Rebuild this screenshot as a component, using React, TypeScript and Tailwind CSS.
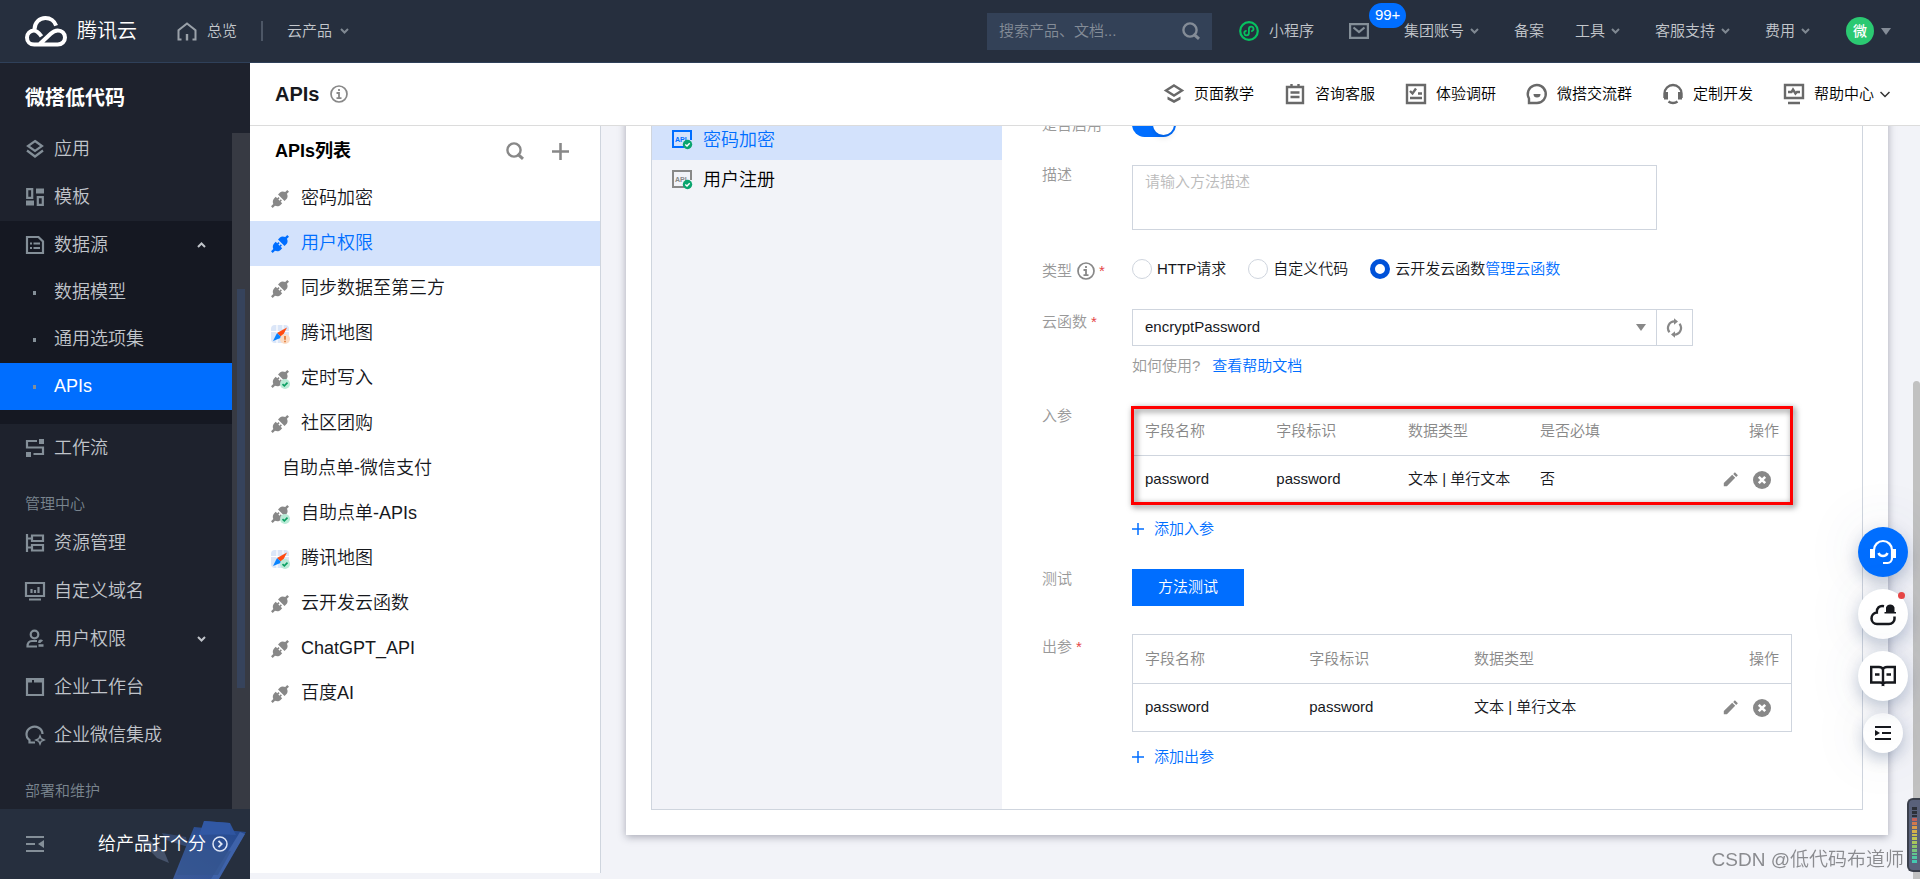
import type { ReactNode } from 'react';
import { useState } from 'react';
import clsx from 'clsx';

type IconProps = { className?: string };

const Chevron = ({ className }: IconProps) => (
  <svg className={className} width="9" height="6" viewBox="0 0 9 6" fill="none" stroke="currentColor" strokeWidth="2">
    <path d="M1 1l3.5 3.5L8 1" />
  </svg>
);

const Caret = ({ className }: IconProps) => (
  <svg className={className} width="10" height="7" viewBox="0 0 10 7" fill="currentColor">
    <path d="M0 0h10L5 7z" />
  </svg>
);

const SearchIcon = ({ className }: IconProps) => (
  <svg className={className} width="18" height="18" viewBox="0 0 18 18" fill="none" stroke="currentColor" strokeWidth="2.4">
    <circle cx="8" cy="8" r="6.6" />
    <path d="M11.5 12l5.5 4.8" strokeWidth="3" />
  </svg>
);

const InfoIcon = ({ className }: IconProps) => (
  <svg className={className} width="18" height="18" viewBox="0 0 18 18" fill="none" stroke="currentColor">
    <circle cx="9" cy="9" r="8" strokeWidth="1.7" />
    <path d="M9 4v2M6.5 8H9v5M6.5 13.2h5" strokeWidth="1.8" />
  </svg>
);

const CloudLogo = () => (
  <svg width="42" height="31" viewBox="0 0 42 31" fill="none" stroke="#fff" strokeWidth="4">
    <path d="M9.5 13.2C9.6 6.6 14.4 2 20.4 2c5 0 9.200 3 10.700 7.600" />
    <path d="M16.500 20.300c-2.900-4-5-5.800-7.700-5.800A6.900 6.900 0 0 0 2 21.400C2 25.600 5 28.600 9.200 28.600h23.500c4.200 0 7.300-3.100 7.300-7.100s-3.100-7.100-7.200-7.100c-3 0-5 1.300-7.100 3.300L14.500 28.200" />
  </svg>
);

const HomeIcon = () => (
  <svg width="20" height="19" viewBox="0 0 20 19" fill="none" stroke="currentColor" strokeWidth="2">
    <path d="M4.500 17.500H1.500V8.300L10 1.500l8.500 6.800v9.200h-3" />
    <path d="M10 12v6.500" strokeWidth="2.400" />
  </svg>
);

const MiniProgramIcon = () => (
  <svg width="20" height="20" viewBox="0 0 20 20" fill="none" stroke="#07c160">
    <circle cx="10" cy="10" r="8.800" strokeWidth="2.200" />
    <path d="M7 9.800a2.300 2.300 0 1 0 2.900 2.300V7.800a2.300 2.300 0 1 1 2.900 2.300" strokeWidth="1.800" strokeLinecap="round" />
  </svg>
);

const MailIcon = () => (
  <svg width="20" height="16" viewBox="0 0 20 16" fill="none" stroke="currentColor" strokeWidth="2.200">
    <path d="M1.100 1.100h17.800v13.800H1.100z" />
    <path d="M4.500 4.500L10 9l5.500-4.500" />
  </svg>
);

const PlugIcon = () => (
  <svg width="18" height="18" viewBox="0 0 18 18" fill="currentColor">
    <g transform="translate(9 9) rotate(-45)">
      <path d="M-11.500-1.200h3.200c.8-2 2.600-3.400 4.500-3.400h2.300v2.200h1.800v1.600h-1.800V.8H.3v1.600h-1.800v2.200h-2.300c-1.900 0-3.700-1.400-4.500-3.400h-3.200z" />
      <path d="M11.500-1.200H8.600C8-3.200 6.400-4.600 4.600-4.600H1.800v9.200h2.800c1.800 0 3.400-1.400 4-3.400h2.900z" />
    </g>
  </svg>
);

const MapIcon = () => (
  <svg width="18" height="18" viewBox="0 0 18 18">
    <rect width="18" height="18" rx="4" fill="#dbe6f8" />
    <path d="M6 0v18M0 6.500h18M12 0v4" stroke="#fff" strokeWidth="1.200" />
    <path d="M16 2.500L6 8l4.800 4.500z" fill="#ff4b12" />
    <path d="M2 16l4-8 4.800 4.500z" fill="#0a84ff" />
  </svg>
);

const StatusBadge = ({ kind }: { kind: 'ok' | 'warn' }) => (
  <svg className="absolute -bottom-px -right-px" width="10" height="10" viewBox="0 0 10 10" fill="none">
    <circle cx="5" cy="5" r="5" fill={kind === 'ok' ? '#b9ead6' : '#fbdcc5'} />
    {kind === 'ok' ? (
      <path d="M2.500 5.200l1.800 1.700 3.200-3.300" stroke="#0a9f62" strokeWidth="1.600" />
    ) : (
      <path d="M5 2v3.700M5 6.800v1.400" stroke="#e0762f" strokeWidth="1.600" />
    )}
  </svg>
);

const ApiIcon = () => (
  <svg width="21" height="20" viewBox="0 0 21 20" fill="none" stroke="currentColor">
    <path d="M12 17H1V1h18v9" strokeWidth="2" />
    <text x="3" y="12" fontSize="7" fontWeight="bold" fill="currentColor" stroke="none">API</text>
    <circle cx="15.500" cy="14.500" r="4.700" fill="#0aa56e" stroke="none" />
    <path d="M13.300 14.500l1.700 1.600 2.700-2.900" stroke="#fff" strokeWidth="1.400" />
  </svg>
);

const PencilIcon = () => (
  <svg width="15" height="15" viewBox="0 0 15 15" fill="currentColor">
    <path d="M.8 14.200v-3.100L9.200 2.800l3 3L3.900 14.200zM10.200 1.900L11.900.2l3 3-1.700 1.700z" />
  </svg>
);

const RemoveIcon = () => (
  <svg width="18" height="18" viewBox="0 0 18 18">
    <circle cx="9" cy="9" r="9" fill="currentColor" />
    <path d="M5.800 5.800l6.400 6.400M12.200 5.800l-6.400 6.400" stroke="#fff" strokeWidth="2.600" />
  </svg>
);

const RefreshIcon = () => (
  <svg width="17" height="20" viewBox="0 0 17 20">
    <path d="M3.500 14.200A6.600 6.600 0 0 1 8.500 3.400M13.500 5.800A6.600 6.600 0 0 1 8.500 16.600" fill="none" stroke="currentColor" strokeWidth="2.200" />
    <path d="M8 .2l4 3.300-4 3.300zM9 19.800l-4-3.300 4-3.300z" fill="currentColor" />
  </svg>
);

const PlusIcon = ({ size = 12, weight = 1.5 }: { size?: number; weight?: number }) => (
  <svg width={size} height={size} viewBox="0 0 12 12" stroke="currentColor" strokeWidth={weight}>
    <path d="M6 0v12M0 6h12" />
  </svg>
);

// 侧边栏图标
const navIcons: Record<string, ReactNode> = {
  app: (
    <>
      <path d="M9 1l7 5-7 5-7-5z" />
      <path d="M1 10.500l8 6 8-6" />
    </>
  ),
  template: (
    <>
      <path d="M1.200 1.200h5v8.600h-5zM11.800 9.200h5v7.600h-5z" />
      <path d="M10 3h8M0 15h8" strokeWidth="5" />
    </>
  ),
  data: (
    <>
      <path d="M1 1h11.500L17 5.500V17H1z" />
      <path d="M4 7.500h2M7.500 7.500H14M4 12h2M7.500 12H14" />
    </>
  ),
  flow: (
    <>
      <path d="M11 2H1v6.500h16V15H7.500" />
      <path d="M15.500 0v5M2.500 13v5" strokeWidth="5" />
    </>
  ),
  resource: (
    <>
      <path d="M1 0v18M1 4.500h5M1 13.500h5" />
      <path d="M6 1.500h11v5.500H6zM6 11h11v5.500H6z" />
    </>
  ),
  domain: (
    <>
      <path d="M0 1h18v13H0zM3 17.500h12" />
      <path d="M5.500 7v4M9 8v3M12.500 5v6" />
    </>
  ),
  user: (
    <>
      <circle cx="8.500" cy="4.500" r="3.800" />
      <path d="M11 11H6c-3 0-4.500 2-4.500 5.500H11" />
      <path d="M12.500 15.500h5M13.500 13v-1.500a1.500 1.500 0 0 1 2.500 0" strokeWidth="2.500" />
    </>
  ),
  bench: (
    <>
      <path d="M1 1h16v16H1z" />
      <path d="M1 3h5M8 3h9" strokeWidth="3" />
    </>
  ),
  wecom: (
    <>
      <path d="M16.500 8A8 7.500 0 1 0 3.500 14v2.500H9" />
      <path d="M14 10l1.200 2.800L18 14l-2.800 1.200L14 18l-1.200-2.800L10 14l2.800-1.200z" strokeWidth="1.500" />
    </>
  ),
};

const NavIcon = ({ name }: { name: string }) => (
  <svg className="shrink-0 overflow-visible text-[#848f98]" width="18" height="18" viewBox="0 0 18 18" fill="none" stroke="currentColor" strokeWidth="2.200">
    {navIcons[name]}
  </svg>
);

const helpLinks: { label: string; icon: ReactNode }[] = [
  {
    label: '页面教学',
    icon: (
      <>
        <path d="M10 1.500l8 5-8 5-8-5z" />
        <path d="M3.500 12.500v3L10 19l6.500-3.500v-3L10 16z" fill="currentColor" stroke="none" />
      </>
    ),
  },
  {
    label: '咨询客服',
    icon: (
      <>
        <path d="M2 3h16v16H2zM6.500 0v4M13.500 0v4" />
        <path d="M5.500 8.500h9M5.500 13h9" />
      </>
    ),
  },
  {
    label: '体验调研',
    icon: (
      <>
        <path d="M1 1h18v18H1z" />
        <path d="M4 7l2.500 2.500L10 4.500M12 9.500h4M4 14h12" />
      </>
    ),
  },
  {
    label: '微搭交流群',
    icon: (
      <>
        <path d="M2 19v-4.500A9 9 0 1 1 10 19z" />
        <path d="M6.500 10h7a3.500 3.500 0 0 1-7 0z" fill="currentColor" stroke="none" />
      </>
    ),
  },
  {
    label: '定制开发',
    icon: (
      <>
        <path d="M1.500 14V9.500a8.500 8.500 0 0 1 17 0V14" />
        <path d="M3 8v7.500M17 8v7.500" strokeWidth="4" />
        <path d="M5.500 17.500c2.500 2 6.500 2 9 0" />
      </>
    ),
  },
  {
    label: '帮助中心',
    icon: (
      <>
        <path d="M1 1h18v13H1zM4 19h12" />
        <path d="M4 8h3.500l1.500-2.500 2.500 4L13 8h3" />
      </>
    ),
  },
];

const topLinks = [
  { label: '集团账号', menu: true },
  { label: '备案', menu: false },
  { label: '工具', menu: true },
  { label: '客服支持', menu: true },
  { label: '费用', menu: true },
];

type ApiItem = { name: string; icon?: 'plug' | 'map'; status?: 'ok' | 'warn'; active?: boolean };

const apiList: ApiItem[] = [
  { name: '密码加密', icon: 'plug' },
  { name: '用户权限', icon: 'plug', active: true },
  { name: '同步数据至第三方', icon: 'plug' },
  { name: '腾讯地图', icon: 'map', status: 'warn' },
  { name: '定时写入', icon: 'plug', status: 'ok' },
  { name: '社区团购', icon: 'plug' },
  { name: '自助点单-微信支付' },
  { name: '自助点单-APIs', icon: 'plug', status: 'ok' },
  { name: '腾讯地图', icon: 'map', status: 'ok' },
  { name: '云开发云函数', icon: 'plug' },
  { name: 'ChatGPT_API', icon: 'plug' },
  { name: '百度AI', icon: 'plug' },
];

function TopBar() {
  return (
    <header className="flex h-[63px] shrink-0 items-center border-b border-[#2f4059] bg-[#262f3e] pl-[25px] pr-[29px] text-[15px] text-[#c3c7cc]">
      <a href="#" className="flex items-center gap-[10px] text-xl text-white">
        <CloudLogo />
        腾讯云
      </a>
      <a href="#" className="ml-10 flex items-center gap-[10px]">
        <span className="text-[#9aa1a9]"><HomeIcon /></span>
        总览
      </a>
      <span className="ml-6 h-5 w-0.5 bg-[#4d5766]" />
      <button className="ml-6 flex items-center gap-2">
        云产品
        <Chevron className="text-[#7f8892]" />
      </button>

      <div className="ml-auto flex items-center">
        <label className="flex h-[37px] w-[225px] items-center bg-[#334157] px-3 text-[#848c97]">
          <input
            aria-label="搜索"
            placeholder="搜索产品、文档..."
            className="min-w-0 flex-1 bg-transparent outline-none placeholder:text-[#848c97]"
          />
          <SearchIcon />
        </label>
        <a href="#" className="ml-[27px] flex items-center gap-[10px]">
          <MiniProgramIcon />
          小程序
        </a>
        <button aria-label="消息" className="relative ml-[35px] mr-[35px] text-[#848f98]">
          <MailIcon />
          <span className="absolute -top-5 left-5 flex h-[25px] items-center rounded-full bg-[#006eff] px-[6px] text-white">99+</span>
        </button>
        <nav className="flex items-center gap-[31px]">
          {topLinks.map((link) => (
            <a
              key={link.label}
              href="#"
              className={clsx('flex items-center gap-[6px]', link.menu ? 'mr-1' : 'mr-0')}
            >
              {link.label}
              {link.menu && <Chevron className="text-[#7f8892]" />}
            </a>
          ))}
        </nav>
        <button className="ml-8 flex items-center gap-[7px] text-[#848c97]">
          <span className="flex size-7 items-center justify-center rounded-full bg-[#2bc972] text-sm font-medium text-white">微</span>
          <Caret />
        </button>
      </div>
    </header>
  );
}

function NavItem({ icon, label, chevron }: { icon: string; label: string; chevron?: 'up' | 'down' }) {
  return (
    <a href="#" className="flex h-12 items-center gap-[10px] pl-[26px] pr-[26px]">
      <NavIcon name={icon} />
      {label}
      {chevron && <Chevron className={clsx('ml-auto', chevron === 'up' && 'rotate-180')} />}
    </a>
  );
}

function SubItem({ label, active }: { label: string; active?: boolean }) {
  return (
    <a
      href="#"
      className={clsx('flex h-[47px] items-center gap-[18px] pl-[33px]', active && 'bg-[#006eff] text-white')}
    >
      <span className="h-1 w-[3px] bg-[#848f98]" />
      {label}
    </a>
  );
}

const NavGroup = ({ children }: { children: ReactNode }) => (
  <h3 className="mt-[17px] h-[30px] pl-[25px] text-[15px] leading-[30px] text-[#7a858f]">{children}</h3>
);

function FeedbackArt() {
  return (
    <svg className="absolute bottom-0 right-1" width="118" height="59" viewBox="0 0 118 59">
      <defs>
        <linearGradient id="board" x1="0" y1="1" x2="1" y2="0">
          <stop offset="0" stopColor="#3c5a99" />
          <stop offset="1" stopColor="#24498f" />
        </linearGradient>
      </defs>
      <path d="M9 14l6 2 21 15 5 12-12-5L12 20z" fill="#46536b" />
      <path d="M34 13l24 4 2 10-22-7z" fill="#34486e" />
      <path d="M66 7l52 5-28 47H45z" fill="url(#board)" />
      <path d="M112 12l5 2-26 45h-8z" fill="#3e62a9" />
      <path d="M60 21c16 9 28 11 43 10L90 55H49z" fill="#35568f" opacity=".7" />
      <path d="M76 1l26 2 6 12-34-1z" fill="#2f55a0" />
      <path d="M76 1l-5 14 31-1V3z" fill="#3158a4" />
    </svg>
  );
}

function Sidebar() {
  return (
    <aside className="flex w-[250px] shrink-0 flex-col bg-[#1e222d] text-[18px] text-[#c0c4ca]">
      <h2 className="h-[70px] shrink-0 pl-[25px] text-xl font-bold leading-[70px] text-white">微搭低代码</h2>
      <div className="flex min-h-0 flex-1">
        <nav className="min-w-0 flex-1 overflow-hidden">
          <div className="-mt-2">
            <NavItem icon="app" label="应用" />
            <NavItem icon="template" label="模板" />
          </div>
          <div className="bg-[#151822] pb-[14px]">
            <NavItem icon="data" label="数据源" chevron="up" />
            <SubItem label="数据模型" />
            <SubItem label="通用选项集" />
            <SubItem label="APIs" active />
          </div>
          <NavItem icon="flow" label="工作流" />
          <NavGroup>管理中心</NavGroup>
          <NavItem icon="resource" label="资源管理" />
          <NavItem icon="domain" label="自定义域名" />
          <NavItem icon="user" label="用户权限" chevron="down" />
          <NavItem icon="bench" label="企业工作台" />
          <NavItem icon="wecom" label="企业微信集成" />
          <NavGroup>部署和维护</NavGroup>
        </nav>
        <div className="flex w-[18px] flex-col bg-[#373a43] px-[5px]">
          <div className="h-[156px]" />
          <div className="h-[399px] bg-[#36435c]" />
        </div>
      </div>
      <div className="relative flex h-[70px] shrink-0 items-center justify-between bg-[#262f3e] pl-[26px] pr-[22px]">
        <FeedbackArt />
        <button aria-label="收起菜单" className="text-[#848f98]">
          <svg width="18" height="16" viewBox="0 0 18 16" fill="none" stroke="currentColor" strokeWidth="2">
            <path d="M0 1h18M0 8h9M0 15h18" />
            <path d="M18 4v8l-6-4z" fill="currentColor" stroke="none" />
          </svg>
        </button>
        <a href="#" className="relative flex items-center gap-[6px] text-white">
          给产品打个分
          <svg width="16" height="16" viewBox="0 0 16 16" fill="none" stroke="#dfe6f5" strokeWidth="1.500">
            <circle cx="8" cy="8" r="7" />
            <path d="M6.500 4.800L9.700 8l-3.200 3.200" strokeWidth="1.800" />
          </svg>
        </a>
      </div>
    </aside>
  );
}

function PageHeader() {
  return (
    <div className="flex h-[63px] shrink-0 items-center border-b border-[#dcdcdc] bg-white pl-[25px] pr-[30px]">
      <h1 className="text-xl font-bold text-[#16181d]">APIs</h1>
      <InfoIcon className="ml-[11px] text-[#888]" />
      <nav className="ml-auto flex items-center gap-[31px] text-[15px] text-black">
        {helpLinks.map((link) => (
          <a key={link.label} href="#" className="flex items-center gap-[10px]">
            <svg className="overflow-visible text-[#696969]" width="20" height="20" viewBox="0 0 20 20" fill="none" stroke="currentColor" strokeWidth="2.400">
              {link.icon}
            </svg>
            {link.label}
            {link.label === '帮助中心' && (
              <svg className="-ml-1" width="10" height="7" viewBox="0 0 10 7" fill="none" stroke="#333" strokeWidth="1.500">
                <path d="M.5 1L5 5.500 9.500 1" />
              </svg>
            )}
          </a>
        ))}
      </nav>
    </div>
  );
}

function ApiList() {
  return (
    <section className="mb-[6px] w-[351px] shrink-0 border-r border-[#cfd5de] bg-white text-[18px] text-[#16181d]">
      <div className="flex h-[50px] items-center pl-[25px] pr-[31px] text-[#888]">
        <h2 className="font-bold text-black">APIs列表</h2>
        <button aria-label="搜索" className="ml-auto"><SearchIcon /></button>
        <button aria-label="新增" className="ml-7"><PlusIcon size={17} weight={1.8} /></button>
      </div>
      <ul>
        {apiList.map((api, i) => (
          <li key={i}>
            <button
              className={clsx(
                'flex h-[45px] w-full items-center text-left',
                api.icon ? 'gap-3 pl-[21px]' : 'pl-8',
                api.active && 'bg-[#d3e2fc] text-[#006eff]',
              )}
            >
              {api.icon && (
                <span className={clsx('relative', !api.active && 'text-[#888]')}>
                  {api.icon === 'plug' ? <PlugIcon /> : <MapIcon />}
                  {api.status && <StatusBadge kind={api.status} />}
                </span>
              )}
              {api.name}
            </button>
          </li>
        ))}
      </ul>
    </section>
  );
}

function FormRow({ label, labelFor, required, info, low, children }: {
  label: string;
  labelFor?: string;
  required?: boolean;
  info?: boolean;
  low?: boolean;
  children: ReactNode;
}) {
  return (
    <div className="flex">
      <div className={clsx('flex h-5 w-[90px] shrink-0 items-center text-[#999]', (required || low) && 'mt-[3px]')}>
        <label htmlFor={labelFor}>{label}</label>
        {info && <InfoIcon className="ml-[5px] text-[#888]" />}
        {required && <span className="ml-1 text-[#e54545]">*</span>}
      </div>
      <div className="min-w-0 flex-1">{children}</div>
    </div>
  );
}

function ParamTable({ columns, row }: { columns: string[]; row: string[] }) {
  return (
    <table className="w-full table-fixed border border-[#cfd5de] text-left">
      <thead>
        <tr className="h-[49px] border-b border-[#cfd5de] text-[#888]">
          {columns.map((c) => (
            <th key={c} className="pl-3 font-[350]">{c}</th>
          ))}
          <th className="pr-3 text-right font-[350]">操作</th>
        </tr>
      </thead>
      <tbody>
        <tr className="h-12">
          {row.map((cell, i) => (
            <td key={i} className="whitespace-nowrap pl-3">{cell}</td>
          ))}
          <td className="pr-5">
            <div className="flex items-center justify-end gap-[15px] text-[#888]">
              <button aria-label="编辑"><PencilIcon /></button>
              <button aria-label="删除"><RemoveIcon /></button>
            </div>
          </td>
        </tr>
      </tbody>
    </table>
  );
}

const AddLink = ({ children }: { children: ReactNode }) => (
  <button type="button" className="mt-[13px] flex h-6 items-center gap-[10px] text-[#006eff]">
    <PlusIcon />
    {children}
  </button>
);

function MethodForm() {
  const [enabled, setEnabled] = useState(true);
  const [kind, setKind] = useState('fn');

  const kinds = [
    { id: 'http', label: 'HTTP请求' },
    { id: 'code', label: '自定义代码' },
    { id: 'fn', label: '云开发云函数' },
  ];

  return (
    <form className="flex min-w-0 flex-1 flex-col gap-7 px-10 pb-10 pt-3 text-[15px] text-[#16181d]">
      <FormRow label="是否启用" labelFor="enabled" low>
        <input
          id="enabled"
          type="checkbox"
          checked={enabled}
          onChange={(e) => setEnabled(e.target.checked)}
          className="block h-[25px] w-11 appearance-none rounded-full bg-[#c0c4cc] p-[2px] before:block before:size-[21px] before:rounded-full before:bg-white before:shadow-md checked:bg-[#006eff] checked:before:ml-[19px]"
        />
      </FormRow>

      <FormRow label="描述" labelFor="desc">
        <textarea
          id="desc"
          placeholder="请输入方法描述"
          className="block h-[65px] w-full max-w-[525px] resize-none border border-[#cfd5de] px-3 py-[6px] leading-5 outline-none placeholder:text-[#bbb]"
        />
      </FormRow>

      <FormRow label="类型" required info>
        <div className="flex h-[22px] items-center">
          <div className="flex gap-[22px]">
            {kinds.map((k) => (
              <label key={k.id} className="flex items-center gap-[5px]">
                <input
                  type="radio"
                  name="kind"
                  checked={kind === k.id}
                  onChange={() => setKind(k.id)}
                  className="size-5 appearance-none rounded-full border border-[#cfd5de] checked:border-[5px] checked:border-[#0052d9]"
                />
                {k.label}
              </label>
            ))}
          </div>
          <a href="#" className="text-[#006eff]">管理云函数</a>
        </div>
      </FormRow>

      <FormRow label="云函数" labelFor="fn" required>
        <div className="flex h-[37px]">
          <div className="relative w-full max-w-[525px]">
            <select id="fn" className="h-full w-full appearance-none border border-[#cfd5de] bg-white px-3 outline-none">
              <option>encryptPassword</option>
            </select>
            <Caret className="pointer-events-none absolute right-[11px] top-[15px] text-[#888]" />
          </div>
          <button type="button" aria-label="刷新" className="-ml-px flex w-[37px] items-center justify-center border border-[#cfd5de] text-[#888]">
            <RefreshIcon />
          </button>
        </div>
        <p className="mt-2 h-6 leading-6 text-[#999]">
          如何使用?
          <a href="#" className="ml-3 text-[#006eff]">查看帮助文档</a>
        </p>
      </FormRow>

      <FormRow label="入参">
        <div className="relative max-w-[660px]">
          <ParamTable
            columns={['字段名称', '字段标识', '数据类型', '是否必填']}
            row={['password', 'password', '文本 | 单行文本', '否']}
          />
          {/* 标注框 */}
          <div className="pointer-events-none absolute -inset-x-px -bottom-px top-0 border-[3px] border-[#f00] drop-shadow-[2px_2px_3px_rgba(0,0,0,0.6)]" />
        </div>
        <AddLink>添加入参</AddLink>
      </FormRow>

      <FormRow label="测试">
        <button type="button" className="block h-[37px] w-28 bg-[#006eff] text-white">方法测试</button>
      </FormRow>

      <FormRow label="出参" required>
        <div className="max-w-[660px]">
          <ParamTable
            columns={['字段名称', '字段标识', '数据类型']}
            row={['password', 'password', '文本 | 单行文本']}
          />
        </div>
        <AddLink>添加出参</AddLink>
      </FormRow>
    </form>
  );
}

function MethodPanel() {
  return (
    <main className="min-w-0 flex-1 overflow-hidden px-[25px]">
      <div className="-mt-[52px] bg-white p-[25px] shadow-[0_2px_8px_rgba(54,58,80,0.4)]">
        <div className="flex border border-[#cfd5de]">
          <ul className="w-[350px] shrink-0 bg-[#f2f3f8] pt-5 text-[18px]">
            <li>
              <button className="flex h-10 w-full items-center gap-[10px] bg-[#d3e2fc] pl-5 text-[#006eff]">
                <ApiIcon />
                密码加密
              </button>
            </li>
            <li>
              <button className="flex h-10 w-full items-center gap-[10px] pl-5 text-black">
                <span className="text-[#888]"><ApiIcon /></span>
                用户注册
              </button>
            </li>
          </ul>
          <MethodForm />
        </div>
      </div>
    </main>
  );
}

const floatButton = 'relative flex size-[50px] items-center justify-center rounded-full shadow-[0_6px_16px_rgba(54,78,120,0.3),0_0_60px_rgba(54,78,120,0.12)]';

function FloatTools() {
  return (
    <div className="fixed right-3 top-[527px] flex flex-col items-center gap-3 text-[#16181d]">
      <button aria-label="在线客服" className={clsx(floatButton, 'bg-[#006eff] text-white')}>
        <svg width="26" height="26" viewBox="0 0 26 26" fill="none" stroke="currentColor" strokeWidth="2.200">
          <path d="M4 11a9 9 0 0 1 18 0v8c0 3-2 5-4.500 5H13" />
          <path d="M2.500 10v9M23.500 10v9" strokeWidth="5" />
          <path d="M8.500 14c1.500 4 7.500 4 9 0" strokeWidth="2.500" />
        </svg>
      </button>
      <button aria-label="消息通知" className={clsx(floatButton, 'bg-white')}>
        <svg width="26" height="23" viewBox="0 0 26 23" fill="none" stroke="currentColor" strokeWidth="2.500">
          <path d="M14 3.200C9.500 2.200 6.500 5 6.800 9.500 3.500 9.800 1.500 12.500 1.500 15.500c0 3.200 2.500 5.500 5.500 5.500h12c3.200 0 5.500-2.500 5.500-5v-2.500" />
          <path d="M16 9V4.500a4.500 4.500 0 0 1 8.500 0V9H26v1.500H14.500V9zM18 11.500h4.500" fill="currentColor" stroke="none" />
        </svg>
        <span className="absolute right-[3px] top-[3px] size-[7px] rounded-full bg-[#e54545]" />
      </button>
      <button aria-label="文档" className={clsx(floatButton, 'bg-white')}>
        <svg width="26" height="22" viewBox="0 0 26 22" fill="none" stroke="currentColor" strokeWidth="2.400">
          <path d="M1.200 2H9c2.200 0 4 1 4 3v13.500c-.8-.8-1.800-1-3-1H1.200zM24.800 2H17c-2.200 0-4 1-4 3v13.500c.8-.8 1.800-1 3-1h8.800z" />
          <path d="M5 9.500h4.500M16.500 9.500H21M13 17v4" />
        </svg>
      </button>
      <button aria-label="收起" className="flex size-10 items-center justify-center rounded-full bg-white shadow-[0_6px_16px_rgba(54,78,120,0.3),0_0_60px_rgba(54,78,120,0.12)]">
        <svg width="16" height="14" viewBox="0 0 16 14" fill="none" stroke="currentColor" strokeWidth="2">
          <path d="M0 1h16M7 7h9M0 13h16" />
          <path d="M0 4l5 3-5 3z" fill="currentColor" stroke="none" />
        </svg>
      </button>
    </div>
  );
}

const meterColors = ['#2c3038', '#2c3038', '#2c3038', '#c0605a', '#d0784e', '#d99a4a', '#d6b04a', '#c9bd4e', '#bfc652', '#a9c65c', '#8fc468', '#78c47c', '#62c58e', '#50c6a0', '#44c8b0'];

function LevelMeter() {
  return (
    <div className="fixed bottom-[7px] right-0 flex h-[74px] w-[13px] flex-col gap-px rounded-l-md border-2 border-r-0 border-[#3a3f4b] bg-[#59617a] px-[3px] py-[7px]">
      {meterColors.map((c, i) => (
        <span key={i} className="flex-1" style={{ backgroundColor: c }} />
      ))}
    </div>
  );
}

export default function App() {
  return (
    <div className="flex h-screen flex-col overflow-hidden bg-[#f2f3f8] font-['Liberation_Sans','Noto_Sans_CJK_SC',sans-serif] font-[350]">
      <TopBar />
      <div className="flex min-h-0 flex-1">
        <Sidebar />
        <div className="flex min-w-0 flex-1 flex-col">
          <PageHeader />
          <div className="flex min-h-0 flex-1">
            <ApiList />
            <MethodPanel />
            <div className="flex w-[7px] shrink-0 flex-col pt-[255px]">
              <div className="flex-1 rounded-t-full bg-[#c1c1c1]" />
            </div>
          </div>
        </div>
      </div>
      <FloatTools />
      <LevelMeter />
      <div className="pointer-events-none fixed bottom-1 right-4 text-[19px] leading-[30px] text-[#8a8b8f]">CSDN @低代码布道师</div>
    </div>
  );
}
